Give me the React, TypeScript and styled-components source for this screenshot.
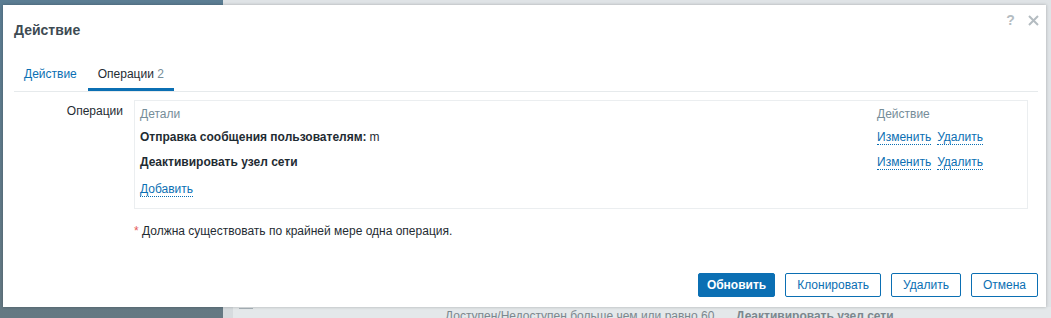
import { createGlobalStyle, styled } from "styled-components";

const GlobalStyle = createGlobalStyle`
  html, body {
    margin: 0;
    padding: 0;
    overflow: hidden;
  }
  body {
    font-family: "Liberation Sans", Arial, sans-serif;
    font-size: 12px;
    color: #1f2c33;
  }
`;

const App = () => {
  return (
    <>
      <GlobalStyle />
      <Page>
        <Sidebar />
        <Main>
          <BackRow>
            <BackGrip />
            <BackCell $width={291}>Доступен/Недоступен больше чем или равно 60</BackCell>
            <BackCell $width={200} $bold>
              Деактивировать узел сети
            </BackCell>
          </BackRow>
        </Main>

        <Dialog>
          <Header>
            <Title>Действие</Title>
            <HeaderIcons>
              <IconBtn>?</IconBtn>
              <IconBtn>
                <svg width="11" height="11" viewBox="0 0 11 11">
                  <path d="M1 1 L10 10 M10 1 L1 10" stroke="#b4bcc1" strokeWidth="2" />
                </svg>
              </IconBtn>
            </HeaderIcons>
          </Header>

          <Tabs>
            <Tab>Действие</Tab>
            <Tab $active>
              Операции <Count>2</Count>
            </Tab>
          </Tabs>

          <Form>
            <Label>Операции</Label>
            <OpsBox>
              <OpsGrid>
                <HeadCell>Детали</HeadCell>
                <HeadCell>Действие</HeadCell>

                <Cell>
                  <b>Отправка сообщения пользователям:</b> m
                </Cell>
                <Cell>
                  <Links>
                    <Link>Изменить</Link>
                    <Link>Удалить</Link>
                  </Links>
                </Cell>

                <Cell>
                  <b>Деактивировать узел сети</b>
                </Cell>
                <Cell>
                  <Links>
                    <Link>Изменить</Link>
                    <Link>Удалить</Link>
                  </Links>
                </Cell>
              </OpsGrid>
              <AddRow>
                <Link>Добавить</Link>
              </AddRow>
            </OpsBox>

            <span />
            <Note>
              <Star>*</Star> Должна существовать по крайней мере одна операция.
            </Note>
          </Form>

          <Footer>
            <Button $primary>Обновить</Button>
            <Button>Клонировать</Button>
            <Button>Удалить</Button>
            <Button>Отмена</Button>
          </Footer>
        </Dialog>
      </Page>
    </>
  );
};

export default App;

const Page = styled.div`
  position: relative;
  width: 1051px;
  height: 318px;
  display: flex;
  overflow: hidden;
`;

const Sidebar = styled.div`
  width: 223px;
  background: linear-gradient(180deg, #5b7d93 0%, #617a88 60%, #657983 100%);
`;

const Main = styled.div`
  flex: 1;
  background: #dfe3e6;
  display: flex;
  flex-direction: column;
  justify-content: flex-end;
`;

const BackRow = styled.div`
  height: 11px;
  display: flex;
  align-items: flex-start;
  background: #e4e8ea;
  border-left: 10px solid #d6dbde;
  overflow: hidden;
`;

const BackGrip = styled.div`
  width: 14px;
  height: 1px;
  margin: 1px 192px 0 6px;
  background: #a9b3b9;
`;

const BackCell = styled.div<{ $width: number; $bold?: boolean }>`
  width: ${(p) => p.$width}px;
  line-height: 12px;
  font-size: 12px;
  color: #7b878e;
  font-weight: ${(p) => (p.$bold ? "bold" : "normal")};
  transform: translateY(3px);
  white-space: nowrap;
`;

const Dialog = styled.div`
  position: absolute;
  left: 3px;
  top: 5px;
  width: 1043px;
  height: 302px;
  box-sizing: border-box;
  background: #fff;
  padding: 0 8px 0 11px;
  display: flex;
  flex-direction: column;
  box-shadow: 0 0 3px rgba(0, 0, 0, 0.25);
`;

const Header = styled.div`
  display: flex;
  justify-content: space-between;
  align-items: flex-start;
  height: 53px;
`;

const Title = styled.h4`
  margin: 15px 0 0 0;
  font-size: 14px;
  line-height: 20px;
  font-weight: bold;
  color: #3e4b53;
`;

const HeaderIcons = styled.div`
  display: flex;
  align-items: center;
  gap: 10px;
  margin-top: 8px;
  margin-right: -2px;
`;

const IconBtn = styled.span`
  width: 13px;
  height: 14px;
  display: flex;
  align-items: center;
  justify-content: center;
  color: #b4bcc1;
  font-size: 14px;
  font-weight: bold;
`;

const Tabs = styled.div`
  display: flex;
  gap: 1px;
  border-bottom: 1px solid #e6eaec;
`;

const Tab = styled.div<{ $active?: boolean }>`
  padding: 9px 10px 7px;
  line-height: 14px;
  font-size: 12px;
  color: ${(p) => (p.$active ? "#1f2c33" : "#0b6fb3")};
  border-bottom: 3px solid ${(p) => (p.$active ? "#0b6fb3" : "transparent")};
`;

const Count = styled.span`
  color: #768d99;
`;

const Form = styled.div`
  display: grid;
  grid-template-columns: 109px 1fr;
  column-gap: 11px;
  margin-top: 8px;
  padding-right: 10px;
`;

const Label = styled.div`
  text-align: right;
  line-height: 14px;
  padding-top: 4px;
`;

const OpsBox = styled.div`
  border: 1px solid #ebeef0;
  padding: 2px 5px 9px;
`;

const OpsGrid = styled.div`
  display: grid;
  grid-template-columns: 1fr 145px;
`;

const HeadCell = styled.div`
  height: 21px;
  line-height: 22px;
  color: #768d99;
`;

const Cell = styled.div`
  height: 25px;
  display: flex;
  align-items: center;
  white-space: nowrap;

  b {
    margin-right: 3px;
  }
`;

const Links = styled.div`
  display: flex;
  gap: 6px;
  padding-top: 1px;
`;

const Link = styled.span`
  color: #0b6fb3;
  line-height: 14px;
  border-bottom: 1px dotted #0b6fb3;
`;

const AddRow = styled.div`
  margin-top: 5px;
  height: 20px;
  display: flex;
  align-items: center;
`;

const Note = styled.div`
  margin-top: 15px;
  line-height: 14px;
`;

const Star = styled.span`
  color: #e45959;
`;

const Footer = styled.div`
  margin-top: auto;
  margin-bottom: 10px;
  display: flex;
  justify-content: flex-end;
  gap: 10px;
`;

const Button = styled.button<{ $primary?: boolean }>`
  height: 24px;
  padding: 0 ${(p) => (p.$primary ? 8 : 11)}px;
  border-radius: 2px;
  border: 1px solid #0b6fb3;
  font-family: "Liberation Sans", Arial, sans-serif;
  font-size: 12px;
  font-weight: ${(p) => (p.$primary ? "bold" : "normal")};
  background: ${(p) => (p.$primary ? "#0b6fb3" : "#fff")};
  color: ${(p) => (p.$primary ? "#fff" : "#0b6fb3")};
`;
